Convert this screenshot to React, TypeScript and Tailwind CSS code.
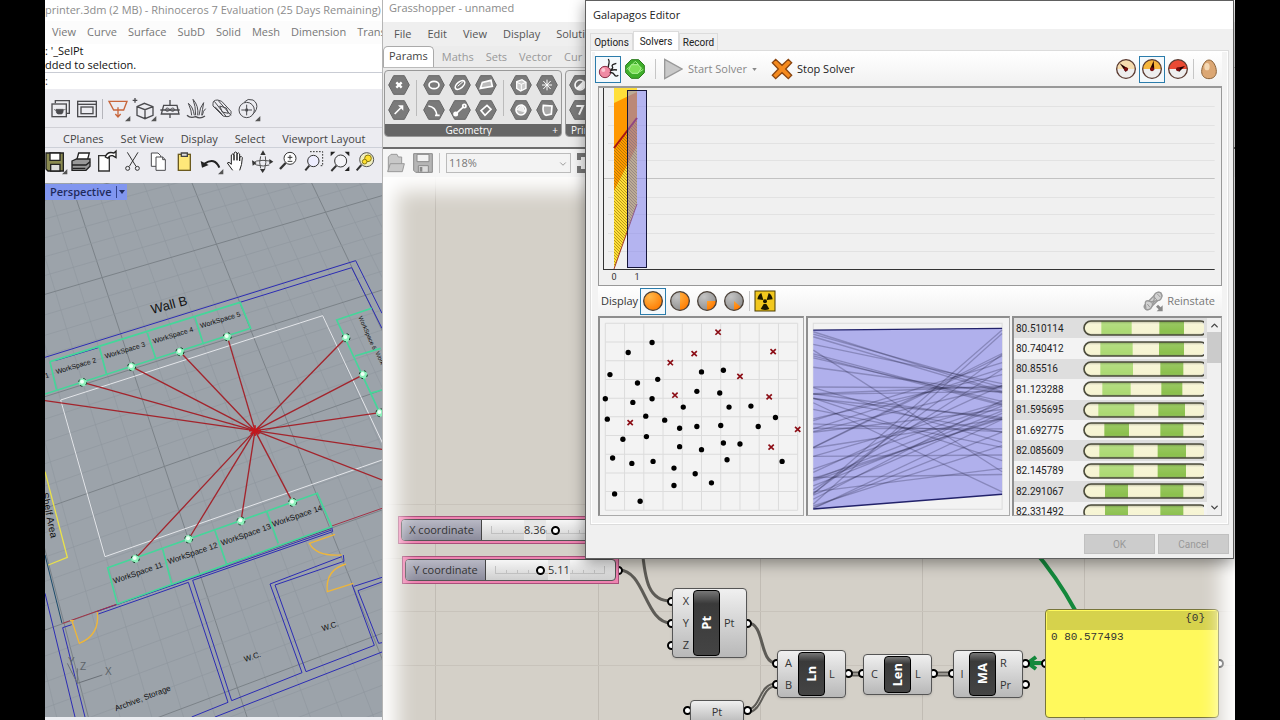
import type { ReactNode } from 'react';
import { ChevronDown, ChevronUp } from 'lucide-react';

/* ---------- Rhino ---------- */

const rhinoMenu = ['View', 'Curve', 'Surface', 'SubD', 'Solid', 'Mesh', 'Dimension', 'Trans'];
const rhinoTabs = ['CPlanes', 'Set View', 'Display', 'Select', 'Viewport Layout'];

function ToolIcon({ label, corner, children }: { label: string; corner?: boolean; children: ReactNode }) {
  return (
    <button aria-label={label} className="h-[26px] w-[26px] shrink-0">
      <svg viewBox="0 0 78 78" className="h-full w-full" fill="none" stroke="#4b4b4f" strokeWidth="4">
        {children}
        {corner && <path d="M76 60v16H60z" fill="#555" stroke="none" />}
      </svg>
    </button>
  );
}

function RhinoTopTools() {
  return (
    <div className="flex h-[39px] items-center border-b border-[#d0d0d6] pt-px pl-[3px]">
      <ToolIcon label="Render preview">
        <path d="M22 22V14H64V52H56" />
        <rect x="12" y="24" width="43" height="38" />
        <path d="M24 40h22q0 14-6 14H30q-6 0-6-14zM46 42l7-2M24 44l-6-4" fill="#4b4b4f" strokeWidth="2" />
      </ToolIcon>
      <ToolIcon label="Render window">
        <rect x="11" y="16" width="56" height="46" />
        <rect x="21" y="33" width="36" height="20" />
        <path d="M11 25h56" />
      </ToolIcon>
      <span className="mx-[2px] h-5 w-px bg-[#b5b5bb]" />
      <ToolIcon label="Set CPlane" corner>
        <path d="M12 16H66L56 42H26zM39 34v28M31 54l8 9 8-9" stroke="#c8663c" />
      </ToolIcon>
      <ToolIcon label="Box" corner>
        <path d="M18 32l22-10 26 10v26L42 68 18 58zM18 32l24 9 24-9M42 41v27" />
        <path d="M12 6v14M5 13h14" />
      </ToolIcon>
      <ToolIcon label="Ground plane">
        <path d="M20 28H60L66 54H13zM39 12v16M39 54v12M10 42H68" />
        <path d="M39 41q-10-10-14 0 4 10 14 0 10-10 14 0-4 10-14 0z" strokeWidth="3" />
      </ToolIcon>
      <ToolIcon label="Grass">
        <path d="M34 58Q30 32 16 22Q26 44 26 58M38 58Q38 30 30 10Q48 30 44 58M48 58Q50 34 62 20Q58 42 56 58M58 58Q60 44 68 38" strokeWidth="3" />
        <path d="M12 58q10 10 26 4 14 8 28-2" />
      </ToolIcon>
      <ToolIcon label="Clipping plane">
        <path d="M12 22Q12 12 26 12L38 16 66 46Q68 62 54 62L42 60 12 30z" strokeWidth="3" />
        <path d="M16 16L52 62M28 14L66 58M18 32L40 56" strokeWidth="3" />
        <path d="M32 30L52 36 58 52 40 48z" strokeWidth="3" />
      </ToolIcon>
      <ToolIcon label="Sun" corner>
        <circle cx="35" cy="42" r="23" strokeWidth="3" />
        <path d="M35 26v32M19 42h32" strokeWidth="3" />
        <path d="M28 18q10-12 26-6 16 10 10 28-4 10-12 16" strokeWidth="3" />
        <rect x="31" y="38" width="8" height="8" fill="#4b4b4f" stroke="none" />
      </ToolIcon>
    </div>
  );
}

function RhinoMainTools() {
  return (
    <div className="flex h-[35px] overflow-hidden pt-px">
      <div className="-ml-[3px] flex">
        <ToolIcon label="Save" corner>
          <path d="M12 12H64V66H18L12 60z" fill="#8a8a50" stroke="#222" />
          <path d="M24 12H54V34H24z" fill="#fff" stroke="#222" />
          <path d="M26 46H54V66H26z" fill="#ddd" stroke="#222" />
        </ToolIcon>
        <ToolIcon label="Print">
          <path d="M26 34L32 12H64L58 34" fill="#fff" stroke="#222" />
          <path d="M12 36L26 30H66V52L54 64H12z" fill="#999" stroke="#222" />
          <path d="M12 48H54L66 38M14 58H52" stroke="#222" />
        </ToolIcon>
        <ToolIcon label="Properties">
          <path d="M14 20H46V66H14z" fill="#fff" stroke="#333" />
          <path d="M34 24q6-18 26-12l6-6v20l-10-6q-10-2-14 8z" fill="#fff" stroke="#222" />
        </ToolIcon>
        <ToolIcon label="Cut">
          <path d="M22 10L48 52M54 10L28 52" stroke="#333" strokeWidth="3" />
          <circle cx="23" cy="58" r="6" stroke="#333" strokeWidth="3" />
          <circle cx="52" cy="58" r="6" stroke="#333" strokeWidth="3" />
        </ToolIcon>
        <ToolIcon label="Copy">
          <path d="M16 12H36L44 20V52H16z" fill="#fff" strokeWidth="3" />
          <path d="M30 24H50L58 32V64H30z" fill="#fff" strokeWidth="3" />
          <path d="M50 24V32H58" strokeWidth="3" />
        </ToolIcon>
        <ToolIcon label="Paste">
          <rect x="19" y="16" width="36" height="48" fill="#ffe87a" stroke="#6b5a1e" />
          <path d="M28 12h18v10H28z" fill="#ddd" stroke="#444" />
        </ToolIcon>
        <ToolIcon label="Undo" corner>
          <path d="M64 56Q50 24 20 44" stroke="#222" strokeWidth="6" />
          <path d="M8 36L12 56 32 48z" fill="#222" stroke="none" />
        </ToolIcon>
        <ToolIcon label="Pan">
          <path d="M26 64L10 42q4-6 12 4V18q4-6 8 0V34 12q5-6 9 0V34 14q5-5 8 1V36 24q6-4 8 2-1 22-8 38" fill="#fff" stroke="#222" strokeWidth="3" />
        </ToolIcon>
        <ToolIcon label="Rotate view">
          <path d="M58 48Q40 54 20 48 6 42 20 36 38 32 60 36M32 58Q26 40 32 22M46 22Q50 40 44 60" stroke="#555" strokeWidth="3" />
          <path d="M31 18l8-14 8 14zM30 60l8 12 8-12zM6 34l2 16 12-8zM58 30l12 8-12 8z" fill="#333" stroke="none" />
        </ToolIcon>
        <ToolIcon label="Zoom dynamic">
          <circle cx="42" cy="28" r="18" fill="#fff" stroke="#333" strokeWidth="3" />
          <path d="M42 18v14M35 25h14M35 37h14" stroke="#333" strokeWidth="3" />
          <path d="M29 42L12 60" stroke="#333" strokeWidth="7" />
        </ToolIcon>
        <ToolIcon label="Zoom window">
          <path d="M24 8H62V50H52" stroke="#333" strokeDasharray="5 4" strokeWidth="3" />
          <circle cx="34" cy="36" r="17" fill="#eef" stroke="#333" strokeWidth="3" />
          <path d="M22 50L10 64" stroke="#333" strokeWidth="6" />
        </ToolIcon>
        <ToolIcon label="Zoom extents">
          <path d="M8 22V8H22zM64 22V8H50zM64 52V66H50z" fill="#222" stroke="none" />
          <circle cx="38" cy="36" r="18" fill="#f4f4f8" stroke="#333" strokeWidth="3" />
          <path d="M25 50L10 66" stroke="#333" strokeWidth="6" />
        </ToolIcon>
        <ToolIcon label="Zoom selected">
          <circle cx="38" cy="32" r="21" fill="#f0eec0" stroke="#555" strokeWidth="3" />
          <circle cx="42" cy="28" r="10" fill="#ffe02e" stroke="#8a7a10" strokeWidth="3" />
          <circle cx="32" cy="38" r="7" fill="#ffe02e" stroke="#8a7a10" strokeWidth="3" />
          <path d="M22 48L8 64" stroke="#333" strokeWidth="6" />
        </ToolIcon>
      </div>
    </div>
  );
}

// Grid families of the construction plane: [start, end] of every major line
const steep = [[-630, -330], [-270, 145], [93, 621], [456, 1096], [815, 1580], [1175, 2060]];
const shallow = [[0, -270], [283, -13], [590, 270], [925, 570], [1290, 930], [1680, 1300], [2090, 1690]];

function subdivide(lines: number[][]) {
  const out: { a: number; b: number; major: boolean }[] = [];
  for (let i = 0; i < lines.length - 1; i++) {
    for (let k = 0; k < 5; k++) {
      const t = k / 5;
      out.push({
        a: lines[i][0] + (lines[i + 1][0] - lines[i][0]) * t,
        b: lines[i][1] + (lines[i + 1][1] - lines[i][1]) * t,
        major: k === 0,
      });
    }
  }
  return out;
}

const rays = [
  [15, 602], [128, 547], [275, 500], [420, 455], [562, 410], [918, 413], [970, 524], [1020, 638],
  [1026, 748], [1026, 840], [286, 1076], [446, 1017], [603, 963], [758, 907],
];

function PlanText({ x, y, angle, size, children }: { x: number; y: number; angle: number; size: number; children: ReactNode }) {
  return (
    <text x={x} y={y} fontSize={size} transform={`rotate(${angle} ${x} ${y})`} fill="#111">
      {children}
    </text>
  );
}

function Viewport() {
  return (
    <svg
      viewBox="15 -51 1011 1602"
      preserveAspectRatio="xMinYMin slice"
      className="absolute inset-0 h-full w-full font-['Liberation_Sans',sans-serif]"
      fill="none"
      strokeWidth="3"
    >
      {subdivide(steep).map((l, i) => (
        <path key={i} d={`M${l.a} -51L${l.b} 1551`} stroke={l.major ? '#7b8288' : '#90979e'} strokeWidth={l.major ? 3 : 2} />
      ))}
      {subdivide(shallow).map((l, i) => (
        <path key={i} d={`M15 ${l.a}L1026 ${l.b}`} stroke={l.major ? '#7b8288' : '#90979e'} strokeWidth={l.major ? 3 : 2} />
      ))}

      {/* Room outline */}
      <path d="M62 600L848 347L1035 745M62 600L195 1070L1026 780" stroke="#e4e6ea" />
      <g stroke="#2c2cb4">
        <path d="M15 472L947 182L1026 340M600 307L935 203L1026 385M45 482L175 443" />
        <path d="M15 1180L105 1551M95 1274L68 1283L135 1551M175 1242L445 1147L564 1507L455 1551" />
        <path d="M172 1234L875 990M458 1141L575 1502L786 1418L690 1152L905 1070M458 1141L878 995L875 980" />
        <path d="M910 1065L912 1084L705 1155L798 1415L1003 1336L936 1153M942 1159L1026 1132M1026 1146L954 1172L1016 1330L1026 1328M525 1551L1026 1356" />
      </g>
      <path d="M15 1065L66 1270" stroke="#1b4a6a" />
      <path d="M68 1270L232 1212M875 978L1026 925" stroke="#a33246" />
      <path d="M560 1093L875 985" stroke="#5b3a8c" />

      {/* Workspaces */}
      <g stroke="#45d69a" strokeWidth="5">
        <path d="M30 485L600 307L632 385L15 582M30 485L50 572M178 440L200 525M322 398L348 478M465 352L490 432" />
        <path d="M995 325L890 360L1020 640M945 468L1022 445M990 580L1026 570" />
        <path d="M203 1103L832 880L875 980L232 1212ZM368 1047L395 1152M525 992L560 1093M680 933L715 1030" />
      </g>

      <path d="M15 815L82 1072L25 1095" stroke="#e9e14a" strokeWidth="4" />
      <g stroke="#eeb63a" strokeWidth="4">
        <path d="M95 1260L118 1330Q180 1305 172 1236M90 1262h12" />
        <path d="M885 1003L808 1030Q830 1070 905 1065M918 1092Q855 1110 862 1175L940 1150" />
      </g>

      {rays.map(([x, y], i) => (
        <path key={i} d={`M645 692L${x} ${y}`} stroke="#a3242c" strokeWidth="4" />
      ))}
      <path d="M632 682L658 702M632 702L658 682M645 676V708M627 692H663" stroke="#c4161c" strokeWidth="5" />
      {rays.filter(([x]) => x > 15 && x < 1026).map(([x, y], i) => (
        <g key={i}>
          <circle cx={x} cy={y} r="12" fill="#8df0bb" stroke="#183c2a" strokeDasharray="8 11" />
          <circle cx={x - 2} cy={y - 2} r="6" fill="#f0fff6" />
        </g>
      ))}

      <PlanText x={337} y={342} angle={-15} size={39}>Wall B</PlanText>
      <PlanText x={17} y={535} angle={-17} size={21}>1</PlanText>
      <PlanText x={50} y={523} angle={-17} size={21}>WorkSpace 2</PlanText>
      <PlanText x={197} y={476} angle={-17} size={21}>WorkSpace 3</PlanText>
      <PlanText x={341} y={431} angle={-17} size={21}>WorkSpace 4</PlanText>
      <PlanText x={483} y={385} angle={-17} size={21}>WorkSpace 5</PlanText>
      <PlanText x={955} y={352} angle={66} size={18}>WorkSpace 6</PlanText>
      <PlanText x={1006} y={458} angle={66} size={18}>Work</PlanText>
      <PlanText x={223} y={1151} angle={-19} size={24}>WorkSpace 11</PlanText>
      <PlanText x={386} y={1093} angle={-19} size={24}>WorkSpace 12</PlanText>
      <PlanText x={546} y={1037} angle={-19} size={24}>WorkSpace 13</PlanText>
      <PlanText x={700} y={981} angle={-19} size={24}>WorkSpace 14</PlanText>
      <PlanText x={4} y={880} angle={78} size={30}>Shelf Area</PlanText>
      <PlanText x={228} y={1534} angle={-21} size={24}>Archive, Storage</PlanText>
      <PlanText x={848} y={1294} angle={-18} size={24}>W.C.</PlanText>
      <PlanText x={615} y={1386} angle={-18} size={24}>W.C.</PlanText>

      {/* World axes */}
      <path d="M112 1450V1405M112 1450L187 1425M112 1450L82 1390" stroke="#6a7077" />
      <g fontSize="30" fill="#5d6369">
        <text x="120" y="1409">Z</text>
        <text x="195" y="1426">X</text>
        <text x="84" y="1394">Y</text>
      </g>
    </svg>
  );
}

function RhinoWindow() {
  return (
    <section className="flex w-[337px] shrink-0 flex-col overflow-hidden bg-[#ececf1]">
      <div className="flex h-[21px] items-center bg-white text-[11px] whitespace-nowrap text-[#8c8c8c]">
        printer.3dm (2 MB) - Rhinoceros 7 Evaluation (25 Days Remaining) - [P
      </div>
      <nav className="flex h-[23px] items-center gap-[11px] bg-[#fcfcfc] pl-[7px] text-[11px] whitespace-nowrap text-[#777]">
        {rhinoMenu.map((m) => <button key={m}>{m}</button>)}
      </nav>
      <div className="border-b border-[#c9ccd4] bg-white text-[11px] leading-[14px] text-[#111]">
        <p>: '_SelPt</p>
        <p>dded to selection.</p>
      </div>
      <label className="flex h-4 items-center bg-white text-[11px] text-[#333]">
        :
        <input aria-label="Command" className="ml-1 h-3 flex-1 outline-none" />
      </label>
      <RhinoTopTools />
      <div className="flex h-5 items-end gap-[17px] border-b border-[#cdd0d8] pl-[18px] text-[11px] leading-4 whitespace-nowrap text-[#444]">
        {rhinoTabs.map((t) => <button key={t}>{t}</button>)}
      </div>
      <RhinoMainTools />
      <div className="relative min-h-0 flex-1 overflow-hidden bg-[#9ca3aa]">
        <Viewport />
        <button className="absolute top-px left-0 flex h-4 items-center bg-[#8196ef] pl-[5px] text-[11px] font-semibold text-[#1f2a5c]">
          Perspective
          <span className="ml-[5px] flex h-3 w-[11px] items-center justify-center border-l border-[#33438c]">
            <svg viewBox="0 0 6 4" className="h-1 w-[6px]"><path d="M0 0h6L3 4z" fill="#1f2a5c" /></svg>
          </span>
        </button>
      </div>
      <div className="h-[3px] bg-[#eceef2]" />
    </section>
  );
}

/* ---------- Grasshopper ---------- */

function Hex({ label, children }: { label: string; children: ReactNode }) {
  return (
    <button aria-label={label} className="flex h-[25px] w-[26px] shrink-0 items-center justify-center">
      <svg viewBox="0 0 66 60" className="h-5 w-[22px]" fill="none" stroke="#fff" strokeWidth="5">
        <path d="M17 2H49L64 30L49 58H17L2 30z" fill="#7a7a7a" stroke="#666" strokeWidth="3" />
        {children}
      </svg>
    </button>
  );
}

function Ribbon() {
  return (
    <div className="flex h-[79px] gap-[3px] overflow-hidden bg-[#ebebeb] pt-[2px] pl-px">
      <div className="flex h-[67px] w-[178px] shrink-0 flex-col overflow-hidden rounded-[4px] border border-[#999] bg-[#e6e6e6]">
        <div className="flex min-h-0 flex-1 items-center pl-px">
          <div className="flex flex-col">
            <Hex label="Point"><path d="M25 22L41 38M41 22L25 38" strokeWidth="7" /></Hex>
            <Hex label="Vector"><path d="M20 42L38 24" /><path d="M30 16H46V32z" fill="#fff" stroke="none" /></Hex>
          </div>
          <span className="mx-1 h-9 w-px bg-[#bbb]" />
          <div className="grid grid-cols-3">
            <Hex label="Circle"><ellipse cx="33" cy="30" rx="15" ry="11" /></Hex>
            <Hex label="Curve"><ellipse cx="33" cy="30" rx="17" ry="9" transform="rotate(-40 33 30)" /><path d="M26 34l16-14" strokeWidth="3" /></Hex>
            <Hex label="Plane"><path d="M16 40L22 22 48 16 52 34z" fill="#bbb" /></Hex>
            <Hex label="Arc"><path d="M16 18Q38 20 42 46M36 46h14" /></Hex>
            <Hex label="Line"><path d="M22 40L44 20" /><circle cx="20" cy="42" r="5" fill="#fff" /><circle cx="46" cy="18" r="5" /></Hex>
            <Hex label="Rectangle"><path d="M18 32L36 16 48 28 30 46z" /></Hex>
          </div>
          <span className="mx-1 h-9 w-px bg-[#bbb]" />
          <div className="grid grid-cols-2">
            <Hex label="Box"><path d="M20 20L36 14 48 22V40L32 48 20 40z" fill="#ccc" strokeWidth="4" /><path d="M20 22L34 28L48 22M34 28V46" strokeWidth="3" /></Hex>
            <Hex label="Mesh"><path d="M33 14V46M18 30H48M22 18L44 42M44 18L22 42" strokeWidth="3" /></Hex>
            <Hex label="Brep"><circle cx="33" cy="30" r="15" fill="#bbb" /><path d="M20 30L36 14 46 38" fill="#eee" strokeWidth="3" /></Hex>
            <Hex label="Surface"><path d="M22 16L48 18 46 42 30 46Q18 40 22 16z" fill="#aaa" /></Hex>
          </div>
        </div>
        <div className="flex h-3 items-center justify-center bg-[#666] text-[10px] text-white">
          <span className="flex-1 text-center">Geometry</span>
          <span className="pr-[3px]">+</span>
        </div>
      </div>
      <div className="flex h-[67px] w-[178px] shrink-0 flex-col overflow-hidden rounded-[4px] border border-[#999] bg-[#e6e6e6]">
        <div className="flex flex-1 flex-col justify-center pl-px">
          <Hex label="Boolean"><circle cx="33" cy="30" r="15" /><path d="M24 40L44 20A15 15 0 0 1 24 40z" fill="#fff" /></Hex>
          <Hex label="Integer"><path d="M22 18H42L30 44" strokeWidth="6" /></Hex>
        </div>
        <div className="flex h-3 items-center bg-[#666] pl-[5px] text-[10px] text-white">Prim</div>
      </div>
    </div>
  );
}

function GrasshopperChrome() {
  return (
    <header className="shrink-0 whitespace-nowrap">
      <div className="flex h-[22px] bg-white pl-[6px] text-[11px] leading-4 text-[#8a8a8a]">Grasshopper - unnamed</div>
      <nav className="flex h-6 items-center gap-4 bg-[#efefef] pt-px pl-[11px] text-[11px] text-[#555]">
        {['File', 'Edit', 'View', 'Display', 'Soluti'].map((m) => <button key={m}>{m}</button>)}
      </nav>
      <div className="flex h-[22px] items-end gap-3 border-b border-[#bbb] bg-[#ececec] text-[11px] text-[#999]">
        <button className="-mr-1 h-[21px] rounded-t-[5px] border border-b-0 border-[#aaa] bg-white px-[5px] pb-[2px] text-[#444]">Params</button>
        {['Maths', 'Sets', 'Vector', 'Cur'].map((t) => <button key={t} className="h-5">{t}</button>)}
      </div>
      <Ribbon />
      <div className="flex h-[30px] items-center border-t-2 border-[#6d6d6d] bg-[#f6f6f6] pl-1">
        <button aria-label="Open" className="mr-2">
          <svg viewBox="0 0 54 60" className="h-5 w-[18px]" fill="#c8c8c8" stroke="#999" strokeWidth="3">
            <path d="M4 56V12L12 4H30L34 12H44V34" />
            <path d="M2 56L10 32H52L46 56z" />
          </svg>
        </button>
        <button aria-label="Save document">
          <svg viewBox="0 0 60 60" className="h-5 w-5" stroke="#8a8a8a" strokeWidth="3">
            <path d="M2 2H58V58H8L2 52z" fill="#b5b5b5" />
            <path d="M12 4H48V26H12z" fill="#f2f2f2" />
            <path d="M16 38H46V58H16z" fill="#ddd" />
            <path d="M20 42H28V56H20z" fill="#888" stroke="none" />
          </svg>
        </button>
        <span className="mx-[6px] h-5 w-px bg-[#c4c4c4]" />
        <div className="relative flex">
          <select aria-label="Zoom" className="h-5 w-[125px] appearance-none border border-[#bbb] bg-[#f3f3f3] pl-[2px] text-[11px] leading-4 text-[#777]">
            <option>118%</option>
          </select>
          <ChevronDown size={10} className="pointer-events-none absolute top-[6px] right-[3px] text-[#888]" />
        </div>
        <button aria-label="Zoom extents" className="ml-[6px]">
          <svg viewBox="0 0 20 20" className="h-5 w-5" fill="none" stroke="#777" strokeWidth="4">
            <path d="M2 7V2H8M12 2h6v5M2 13v5H8M12 18h6V13" />
          </svg>
        </button>
      </div>
    </header>
  );
}

function Port({ className }: { className: string }) {
  return <span className={`absolute h-[9px] w-[9px] rounded-full border-2 border-black bg-white ${className}`} />;
}

function Pill({ children }: { children: ReactNode }) {
  return (
    <div className="flex h-full w-[27px] items-center justify-center rounded-[4px] border border-black bg-linear-to-b from-[#777] via-[#3a3a3a] via-20% to-[#444] text-[13px] font-bold text-white">
      <span className="-rotate-90">{children}</span>
    </div>
  );
}

const nodeBox = 'absolute flex rounded-[4px] border border-[#555] bg-linear-to-b from-[#f0f0f0] to-[#b8b8b8] text-[11px] text-[#333] shadow-sm';

function NumberSlider({ id, label, value, position, valueClass, className }: {
  id: string; label: string; value: string; position: number; valueClass: string; className: string;
}) {
  return (
    <div className={`absolute h-7 w-[217px] border border-[#a8507a] bg-[#ee82b0] p-[2px] ${className}`}>
      <div className="flex h-full overflow-hidden rounded-[4px] border border-[#555] bg-linear-to-b from-[#f6f6f6] to-[#cfcfcf]">
        <label htmlFor={id} className="flex w-[80px] items-center justify-center border-r border-[#444] bg-linear-to-b from-[#b8b8c4] to-[#8c8c9c] text-[11px] text-[#333]">
          {label}
        </label>
        <div className="relative flex-1 px-[9px]">
          <svg className="absolute top-[6px] left-[9px] h-2 w-[110px]" stroke="#c0c0c0">
            <path d="M0 7.5H110M.5 0V8M11.5 4V8M22.5 4V8M33.5 4V8M44.5 4V8M55.5 4V8M66.5 4V8M77.5 4V8M88.5 4V8M99.5 4V8M109.5 0V8" />
          </svg>
          <output htmlFor={id} className={`absolute top-0 bg-[#e6e6e6] text-[11px] leading-5 text-[#333] ${valueClass}`}>{value}</output>
          <input
            id={id}
            type="range"
            defaultValue={position}
            className="relative block h-5 w-[110px] appearance-none bg-transparent [&::-webkit-slider-thumb]:h-[9px] [&::-webkit-slider-thumb]:w-[9px] [&::-webkit-slider-thumb]:appearance-none [&::-webkit-slider-thumb]:rounded-full [&::-webkit-slider-thumb]:border-2 [&::-webkit-slider-thumb]:border-black [&::-webkit-slider-thumb]:bg-white"
          />
        </div>
      </div>
    </div>
  );
}

function Canvas() {
  return (
    <div className="relative min-h-0 flex-1 overflow-hidden bg-[#d4d0c8]">
      <svg className="absolute inset-0 h-full w-full" fill="none">
        {[52, 215, 377, 539, 701].map((x) => <line key={x} x1={x + 0.5} x2={x + 0.5} y1="0" y2="100%" stroke="#c1bcb4" />)}
        {[327, 381, 434, 488].map((y) => <line key={y} x1="0" x2="100%" y1={y + 0.5} y2={y + 0.5} stroke="#c8c3bb" />)}
        {/* Wires between components */}
        <g stroke="#5d5b56" strokeWidth="3">
          <path d="M259 370C262 405 266 424 288 424" />
          <path d="M236 393C262 393 262 446 288 446" />
          <path d="M365 446C382 446 376 486 393 486" />
        </g>
        <g stroke="#5d5b56" strokeWidth="5">
          <path d="M363 534C380 534 376 508 393 508M465 497H479M550 497H569" />
        </g>
        <g stroke="#d4d0c8" strokeWidth="1">
          <path d="M363 534C380 534 376 508 393 508M465 497H479M550 497H569" />
        </g>
        <path d="M650 372Q674 400 692 433" stroke="#14883c" strokeWidth="4" />
        <path d="M661 486H646M653 480L645 486L653 492" stroke="#14883c" strokeWidth="4" />
      </svg>

      <NumberSlider id="slider-x" label="X coordinate" value="8.36" position={59} valueClass="left-[42px]" className="top-[339px] left-[15px]" />
      <Port className="top-[389px] left-[231px]" />
      <NumberSlider id="slider-y" label="Y coordinate" value="5.11" position={41} valueClass="left-[62px]" className="top-[379px] left-[19px]" />

      <Port className="top-[420px] left-[284px]" />
      <Port className="top-[442px] left-[284px]" />
      <Port className="top-[464px] left-[284px]" />
      <Port className="top-[442px] left-[360px]" />
      <div className={`${nodeBox} top-[411px] left-[289px] h-[70px] w-[75px] p-px`}>
        <div className="flex w-[19px] flex-col items-end justify-center pr-1 leading-[22px]"><span>X</span><span>Y</span><span>Z</span></div>
        <Pill>Pt</Pill>
        <span className="flex flex-1 items-center pl-1">Pt</span>
      </div>

      <Port className="top-[529px] left-[300px]" />
      <Port className="top-[529px] left-[360px]" />
      <div className={`${nodeBox} top-[523px] left-[307px] h-6 w-[54px] items-center justify-center`}>Pt</div>

      <Port className="top-[482px] left-[389px]" />
      <Port className="top-[503px] left-[389px]" />
      <Port className="top-[492px] left-[461px]" />
      <div className={`${nodeBox} top-[473px] left-[394px] h-12 w-[69px] p-px`}>
        <div className="flex w-[19px] flex-col items-center justify-center leading-[22px]"><span>A</span><span>B</span></div>
        <Pill>Ln</Pill>
        <span className="flex flex-1 items-center pl-1">L</span>
      </div>

      <Port className="top-[492px] left-[475px]" />
      <Port className="top-[492px] left-[546px]" />
      <div className={`${nodeBox} top-[477px] left-[480px] h-[41px] w-[69px] p-px`}>
        <span className="flex w-[19px] items-center justify-center">C</span>
        <Pill>Len</Pill>
        <span className="flex flex-1 items-center pl-1">L</span>
      </div>

      <Port className="top-[492px] left-[565px]" />
      <Port className="top-[482px] left-[638px]" />
      <Port className="top-[503px] left-[638px]" />
      <div className={`${nodeBox} top-[473px] left-[570px] h-12 w-[70px] p-px`}>
        <span className="flex w-[14px] items-center justify-center">I</span>
        <Pill>MA</Pill>
        <div className="flex flex-1 flex-col justify-center pl-1 leading-[22px]"><span>R</span><span>Pr</span></div>
      </div>

      <Port className="top-[482px] left-[658px]" />
      <Port className="top-[482px] left-[832px]" />
      <div className="absolute top-[432px] left-[662px] h-[109px] w-[174px] rounded-[4px] border border-[#77753a] bg-[#fff95c] p-px font-['Liberation_Mono',monospace] text-[11px] text-[#333]">
        <div className="h-[19px] bg-[#d6d24c] pr-3 text-right leading-[14px]">{'{0}'}</div>
        <p className="pl-1 leading-[14px]">0 80.577493</p>
      </div>

      {/* White vignette round the canvas */}
      <div className="pointer-events-none absolute inset-x-0 top-0 -bottom-12 shadow-[inset_0_0_20px_14px_#fff]" />
    </div>
  );
}

/* ---------- Galapagos ---------- */

function IconButton({ label, active, children }: { label: string; active?: boolean; children: ReactNode }) {
  return (
    <button
      aria-label={label}
      className={`flex h-[27px] w-[26px] shrink-0 items-center justify-center border ${active ? 'border-[#2b7cab] bg-[#f4f9fc]' : 'border-transparent'}`}
    >
      <svg viewBox="0 0 66 66" className="h-[22px] w-[22px]" fill="none" strokeWidth="3">{children}</svg>
    </button>
  );
}

function Gauge({ top, needle }: { top: string; needle: string }) {
  return (
    <>
      <circle cx="33" cy="33" r="28" fill="#eee" stroke="none" />
      <path d="M5 33A28 28 0 0 1 61 33z" fill={top} stroke="none" />
      <circle cx="33" cy="33" r="28" stroke="#5a3a30" strokeWidth="4" />
      <path d={needle} fill="#200" stroke="none" />
      <circle cx="33" cy="34" r="6" fill="#7a0c0c" stroke="none" />
    </>
  );
}

function Ball({ slice }: { slice: string }) {
  return (
    <>
      <circle cx="33" cy="33" r="28" fill="url(#ball-grey)" stroke="none" />
      <path d={slice} fill="url(#ball-orange)" stroke="none" />
      <circle cx="33" cy="33" r="28" stroke="#4a4038" strokeWidth="4" />
    </>
  );
}

function SolverToolbar() {
  return (
    <div className="flex h-[34px] items-center bg-linear-to-b from-white to-[#f1f1f1] text-[11px] whitespace-nowrap">
      <IconButton label="Evolutionary solver" active>
        <circle cx="24" cy="42" r="17" fill="#f08aa4" stroke="#8a2e46" />
        <circle cx="19" cy="36" r="6" fill="#fbc8d4" />
        <path d="M34 28Q34 22 36 16T34 3M40 34Q50 32 46 26T58 16M40 38Q50 34 60 36M38 44Q48 42 52 50T64 52" stroke="#222" strokeWidth="4" />
      </IconButton>
      <div className="w-px" />
      <IconButton label="Annealing solver">
        <path d="M22 5H44L61 22V44L44 61H22L5 44V22z" fill="#3fae2a" stroke="#2a7a1c" />
        <path d="M22 20H42L52 30 42 46H24L14 36z" fill="#7ee058" stroke="#b4f59a" />
        <path d="M24 20L34 10 44 20M20 24L8 34M46 42L58 34" stroke="#a8f08c" />
      </IconButton>
      <span className="mx-[7px] h-5 w-px bg-[#c6c6c6]" />
      <button className="flex items-center text-[#888]">
        <svg viewBox="0 0 60 66" className="mr-[5px] h-[22px] w-5"><path d="M5 4L57 33L5 62z" fill="#c9c9c9" stroke="#999" strokeWidth="4" /></svg>
        Start Solver
        <svg viewBox="0 0 6 4" className="mr-[14px] ml-[5px] h-[3px] w-[5px]"><path d="M0 0h6L3 4z" fill="#888" /></svg>
      </button>
      <button className="flex items-center text-[#222]">
        <svg viewBox="0 0 66 66" className="mr-1 h-[22px] w-[22px]">
          <path d="M4 14L14 4L33 22L52 4L62 14L44 33L62 52L52 62L33 44L14 62L4 52L22 33z" fill="#f58a1e" stroke="#8a4510" strokeWidth="4" />
        </svg>
        Stop Solver
      </button>
      <div className="ml-auto flex items-center">
        <IconButton label="Slow"><Gauge top="#f6dcae" needle="M14 16L40 32L32 42z" /></IconButton>
        <IconButton label="Normal" active><Gauge top="#f6b63c" needle="M38 8L40 36L27 34z" /></IconButton>
        <IconButton label="Fast"><Gauge top="#ea4a34" needle="M54 24L36 42L30 30z" /></IconButton>
        <span className="mx-[2px] h-5 w-px bg-[#c6c6c6]" />
        <IconButton label="Egg">
          <path d="M33 6C46 6 55 26 55 40S46 62 33 62 11 54 11 40 20 6 33 6z" fill="#dba774" stroke="#8a6238" />
          <ellipse cx="27" cy="26" rx="8" ry="11" fill="#f4d8b4" />
        </IconButton>
      </div>
    </div>
  );
}

const chartLines = [18, 37, 55, 72, 109, 126, 145, 163];

function FitnessChart() {
  return (
    <div className="border border-t-2 border-[#999] bg-[#f0f0f0] pl-1">
      <svg className="h-[197px] w-full" fill="none">
        <defs>
          <pattern id="hatch" width="3" height="3" patternUnits="userSpaceOnUse">
            <path d="M0 0L3 3" stroke="#8a6a00" strokeOpacity=".6" />
          </pattern>
        </defs>
        <svg width="99%" height="182">
          {chartLines.map((y) => <line key={y} x1="5" x2="100%" y1={y + 0.5} y2={y + 0.5} stroke="#e2e2e2" />)}
          <line x1="0" x2="100%" y1="90.5" y2="90.5" stroke="#c2c2c2" />
          <path d="M11 0H34V116L11 181z" fill="#ffdf3a" />
          <path d="M11 15L34 4V58L11 103z" fill="#ff9800" />
          <path d="M11 60L34 30V116L11 181z" fill="url(#hatch)" />
          <path d="M11 60L34 30" stroke="#a81414" strokeWidth="2" />
          <path d="M11 181L34 116" stroke="#a83a28" />
          <rect x="24.5" y="2.5" width="19" height="177" fill="#7878f0" fillOpacity=".5" stroke="#16163a" />
          <line x1="0" x2="100%" y1="181.5" y2="181.5" stroke="#333" />
          <line x1="0.5" x2="0.5" y1="0" y2="182" stroke="#333" />
        </svg>
        <g fontSize="9" fill="#333" textAnchor="middle" className="font-['Roboto',sans-serif]">
          <text x="11" y="192">0</text>
          <text x="34" y="192">1</text>
        </g>
      </svg>
    </div>
  );
}

function DisplayToolbar() {
  return (
    <div className="flex h-[30px] items-center bg-linear-to-b from-white to-[#f1f1f1] pl-[3px] text-[11px] text-[#333]">
      <span className="w-[39px]">Display</span>
      <svg className="absolute h-0 w-0">
        <defs>
          <radialGradient id="ball-orange" gradientUnits="userSpaceOnUse" cx="24" cy="20" r="44">
            <stop offset="0" stopColor="#ffb84a" />
            <stop offset="1" stopColor="#ff7a00" />
          </radialGradient>
          <radialGradient id="ball-grey" gradientUnits="userSpaceOnUse" cx="24" cy="20" r="44">
            <stop offset="0" stopColor="#c4c4c4" />
            <stop offset="1" stopColor="#8e8e8e" />
          </radialGradient>
        </defs>
      </svg>
      <div className="flex gap-px">
        <IconButton label="Show all" active><Ball slice="M33 5A28 28 0 1 1 32.9 5z" /></IconButton>
        <IconButton label="Show half"><Ball slice="M33 5A28 28 0 0 1 33 61z" /></IconButton>
        <IconButton label="Show quarter"><Ball slice="M33 33H61A28 28 0 0 1 33 61z" /></IconButton>
        <IconButton label="Show few"><Ball slice="M33 33L54 52A28 28 0 0 1 33 61z" /></IconButton>
      </div>
      <span className="mx-[2px] h-5 w-px bg-[#c6c6c6]" />
      <IconButton label="Cull genomes">
        <rect x="3" y="3" width="60" height="60" fill="#f2c81e" stroke="#4a3c00" />
        <path d="M28 30L10 28Q12 14 22 9zM38 30L56 28Q54 14 44 9zM29 42H37L46 57Q33 63 20 57z" fill="#1c1800" stroke="none" />
        <circle cx="33" cy="34" r="6" fill="#1c1800" />
      </IconButton>
      <button className="mr-[7px] ml-auto flex items-center text-[#777]">
        <svg viewBox="0 0 66 66" className="mr-[3px] h-[22px] w-[22px]" fill="#d2d2d2" stroke="#999" strokeWidth="4">
          <rect x="-9" y="-33" width="18" height="66" rx="9" transform="translate(33 33) rotate(45)" />
          <path d="M10 44Q8 28 24 34T36 18Q40 4 56 8L60 18Q58 32 46 32T30 48Q26 62 12 58z" />
          <path d="M24 34L34 44M36 20L46 32M16 42L24 52M46 12L56 22" strokeWidth="3" />
          <path d="M62 46V64H44L50 58 42 50 48 44 56 52z" fill="#888" stroke="none" />
        </svg>
        Reinstate
      </button>
    </div>
  );
}

const dots = [
  [172, 172], [100, 202], [45, 268], [128, 293], [189, 282], [321, 260], [387, 255], [31, 340], [114, 351], [172, 340],
  [307, 318], [376, 323], [266, 365], [404, 365], [470, 362], [37, 401], [153, 392], [210, 404], [255, 428], [307, 423],
  [379, 420], [492, 423], [544, 396], [84, 461], [155, 453], [255, 483], [321, 492], [387, 472], [437, 475], [53, 517],
  [111, 533], [175, 527], [398, 522], [564, 527], [238, 547], [302, 564], [238, 599], [351, 591], [59, 624], [136, 646],
];
const crosses = [
  [371, 141], [299, 205], [227, 232], [537, 199], [437, 273], [241, 329], [525, 334], [106, 411], [611, 431], [531, 484],
];

function SwarmPlot() {
  return (
    <svg viewBox="15 99 612 588" preserveAspectRatio="none" className="h-full w-full">
      {Array.from({ length: 11 }, (_, i) => (
        <path key={i} d={`M${31 + i * 58} 115V673M31 ${115 + i * 55.8}H611`} stroke="#dcdcdc" strokeWidth="3" />
      ))}
      {dots.map(([x, y], i) => <circle key={i} cx={x} cy={y} r="8" fill="#000" />)}
      {crosses.map(([x, y], i) => (
        <path key={i} d={`M${x - 8} ${y - 7}l16 15m0 -15l-16 15`} stroke="#8c0e16" strokeWidth="5" />
      ))}
    </svg>
  );
}

// Left and right height of every genome line
const genomes = [
  [140, 318], [147, 306], [155, 322], [178, 295], [195, 558], [206, 356], [212, 360], [218, 348], [246, 322], [305, 308],
  [307, 470], [325, 302], [327, 318], [338, 440], [340, 396], [352, 618], [325, 402], [400, 268], [405, 232], [415, 438],
  [430, 250], [438, 302], [428, 430], [485, 205], [487, 400], [512, 508], [486, 212], [550, 355], [560, 300], [578, 400],
  [582, 362], [585, 396], [575, 566], [600, 376], [612, 252], [622, 208], [628, 384], [618, 548], [640, 345], [655, 145],
  [625, 135], [660, 480], [668, 402], [665, 440], [372, 485], [512, 350], [338, 525], [440, 372],
];

function GenomePlot() {
  return (
    <svg viewBox="21 99 612 588" preserveAspectRatio="none" className="h-full w-full" fill="none">
      <path d="M37 115H612V670H37z" stroke="#dcdcdc" strokeWidth="3" />
      <path d="M37 135L612 130V625L37 669z" fill="#b0b0ec" />
      {genomes.map(([a, b], i) => <path key={i} d={`M37 ${a}L612 ${b}`} stroke="#202040" strokeOpacity=".28" strokeWidth="4" />)}
      <path d="M37 135L612 130M37 669L612 625" stroke="#22226a" strokeWidth="4" />
    </svg>
  );
}

const light = '#abd972';
const dark = '#8bc04c';
const solutions = [
  { fitness: '80.510114', bands: [[55, 146], [229, 303]], fills: [light, dark] },
  { fitness: '80.740412', bands: [[52, 149], [228, 303]], fills: [light, dark] },
  { fitness: '80.85516', bands: [[52, 150], [232, 301]], fills: [light, dark] },
  { fitness: '81.123288', bands: [[58, 143], [235, 298]], fills: [light, dark] },
  { fitness: '81.595695', bands: [[46, 154], [226, 306]], fills: [light, dark] },
  { fitness: '81.692775', bands: [[64, 138], [232, 301]], fills: [dark, dark] },
  { fitness: '82.085609', bands: [[49, 152], [224, 309]], fills: [light, dark] },
  { fitness: '82.145789', bands: [[49, 152], [224, 309]], fills: [light, dark] },
  { fitness: '82.291067', bands: [[66, 135], [232, 301]], fills: [dark, dark] },
  { fitness: '82.331492', bands: [[66, 135], [232, 301]], fills: [dark, dark] },
];

function SolutionList() {
  return (
    <div className="flex h-full">
      <div className="min-w-0 flex-1 overflow-hidden">
        <table className="h-[204px] w-full table-fixed border-collapse font-['Roboto',sans-serif] text-[10px] text-[#222]">
          <tbody>
            {solutions.map((s) => (
              <tr key={s.fitness} className="odd:bg-[#dedede]">
                <th scope="row" className="w-[69px] p-0 pl-[2px] text-left font-normal">{s.fitness}</th>
                <td className="p-0">
                  <svg viewBox="0 0 363 48" className="block h-4 w-[121px]">
                    <defs>
                      <linearGradient id="gloss" x2="0" y2="1">
                        <stop offset="0" stopColor="#000" stopOpacity=".3" />
                        <stop offset=".25" stopColor="#fff" stopOpacity=".1" />
                        <stop offset=".8" stopColor="#fff" stopOpacity="0" />
                        <stop offset="1" stopColor="#000" stopOpacity=".25" />
                      </linearGradient>
                    </defs>
                    <rect x="3" y="3" width="362" height="42" rx="21" fill="#f6f4d2" />
                    {s.bands.map(([a, b], i) => <rect key={a} x={a} y="3" width={b - a} height="42" fill={s.fills[i]} />)}
                    <rect x="3" y="3" width="370" height="42" rx="21" fill="url(#gloss)" stroke="#4c4c3c" strokeWidth="5" />
                  </svg>
                </td>
              </tr>
            ))}
          </tbody>
        </table>
      </div>
      <div className="flex w-[14px] flex-col items-center bg-[#f0f0f0] py-[2px] text-[#444]">
        <button aria-label="Scroll up"><ChevronUp size={11} strokeWidth={3} /></button>
        <div className="mt-px h-[31px] w-full shrink-0 bg-[#cbcbcb]" />
        <button aria-label="Scroll down" className="mt-auto"><ChevronDown size={11} strokeWidth={3} /></button>
      </div>
    </div>
  );
}

const well = 'min-h-0 min-w-0 overflow-hidden border-2 border-r border-b border-[#8e8e8e] border-r-[#aaa] border-b-[#aaa]';

function GalapagosDialog() {
  return (
    <section
      role="dialog"
      aria-label="Galapagos Editor"
      className="absolute top-0 right-px left-[202px] z-10 border border-[#606060] bg-[#f0f0f0] shadow-[0_4px_14px_rgba(0,0,0,0.4)]"
    >
      <h1 className="h-7 bg-white pl-[7px] text-[11px] leading-[27px] text-[#222]">Galapagos Editor</h1>
      <div className="px-1">
        <div role="tablist" className="flex h-[21px] items-end font-['Roboto',sans-serif] text-[10px] text-[#222]">
          <button role="tab" className="h-[17px] w-[43px] border border-b-0 border-[#dcdcdc]">Options</button>
          <button role="tab" aria-selected className="h-[19px] w-[46px] border border-b-0 border-[#dcdcdc] bg-white">Solvers</button>
          <button role="tab" className="h-[17px] w-[39px] border border-b-0 border-[#dcdcdc]">Record</button>
        </div>
        <div className="border border-[#dcdcdc] bg-white p-px">
          <div className="bg-[#f3f3f3] pr-[5px] pb-[7px]">
            <div className="pl-[3px]"><SolverToolbar /></div>
            <div className="pl-[6px]">
              <FitnessChart />
              <DisplayToolbar />
              <div className="grid h-[200px] grid-cols-[206fr_204fr_210fr] gap-[2px]">
                <div className={well}><SwarmPlot /></div>
                <div className={well}><GenomePlot /></div>
                <div className={well}><SolutionList /></div>
              </div>
            </div>
          </div>
        </div>
      </div>
      <div className="flex justify-end gap-[3px] px-1 pt-[9px] pb-1 font-['Roboto',sans-serif] text-[10px]">
        <button disabled className="h-5 w-[71px] bg-[#cccccc] text-[#999] ring-1 ring-[#c0c0c0] ring-inset">OK</button>
        <button disabled className="h-5 w-[71px] bg-[#cccccc] text-[#999] ring-1 ring-[#c0c0c0] ring-inset">Cancel</button>
      </div>
    </section>
  );
}

export default function App() {
  return (
    <main className="flex h-screen overflow-hidden bg-black px-[45px] font-['Open_Sans','Noto_Sans',sans-serif]">
      <RhinoWindow />
      <section className="relative flex min-w-0 flex-1 flex-col border-l border-[#b5b5b5]">
        <GrasshopperChrome />
        <Canvas />
        <GalapagosDialog />
      </section>
    </main>
  );
}
